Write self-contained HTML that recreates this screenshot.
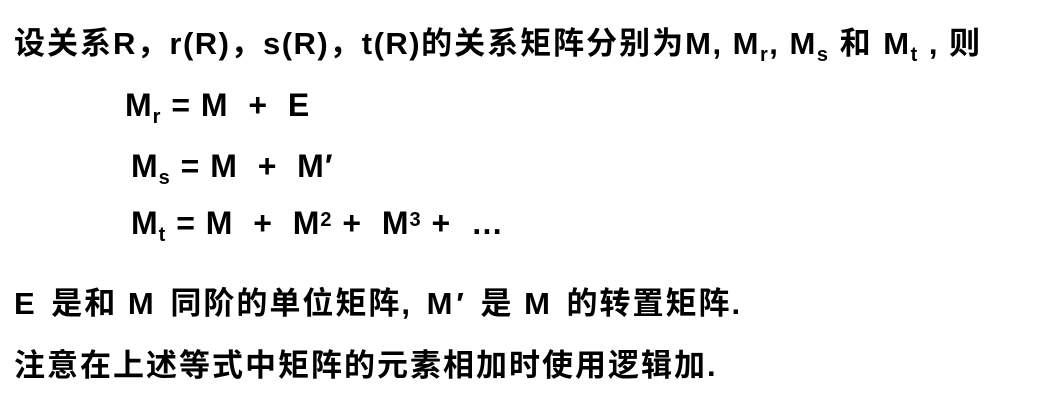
<!DOCTYPE html>
<html><head><meta charset="utf-8"><style>
body{margin:0;width:1037px;height:408px;background:#fff;overflow:hidden;position:relative;
font-family:"Liberation Sans","Noto Sans CJK SC",sans-serif;font-weight:bold;color:#000}
.l{position:absolute;white-space:nowrap;font-size:31px;line-height:36px;letter-spacing:2px}
.m{font-size:32px;letter-spacing:1px}
.w{letter-spacing:1.5px}
.w2{letter-spacing:4px}
sub{font-size:20px;vertical-align:-7px;line-height:0}
sup{font-size:20px;vertical-align:8px;line-height:0}
</style></head><body>
<div class="l" style="left:14px;top:26px">设关系<span class="w">R，r(R)，s(R)，t(R)</span>的关系矩阵分别为<span class="w">M, M<sub>r</sub>, M<sub>s</sub> </span>和 <span class="w">M<sub>t</sub> , </span>则</div>
<div class="l m" style="left:125px;top:87px">M<sub>r</sub> = M &nbsp;+ &nbsp;E</div>
<div class="l m" style="left:131px;top:148px">M<sub>s</sub> = M &nbsp;+ &nbsp;M′</div>
<div class="l m" style="left:131px;top:205px">M<sub>t</sub> = M &nbsp;+ &nbsp;M<sup>2</sup> + &nbsp;M<sup>3</sup> + &nbsp;…</div>
<div class="l" style="left:14px;top:286px"><span class="w2">E </span>是和 <span class="w2">M </span>同阶的单位矩阵<span class="w2">, M′ </span>是 <span class="w2">M </span>的转置矩阵.</div>
<div class="l" style="left:14px;top:348px">注意在上述等式中矩阵的元素相加时使用逻辑加.</div>
</body></html>
